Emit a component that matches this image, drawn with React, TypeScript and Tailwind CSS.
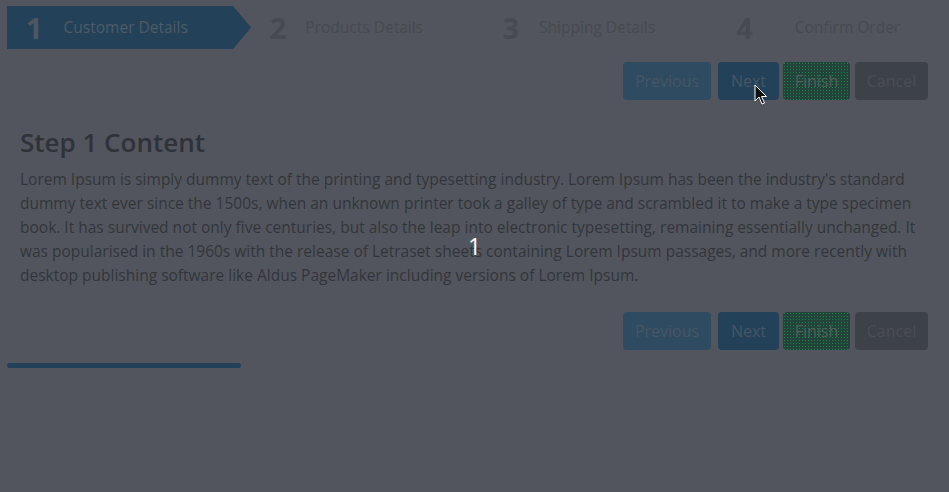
import React from 'react';

const steps = [
  { n: '1', label: 'Customer Details', numMl: 'ml-[19px]', labelMl: 'ml-[21px]' },
  { n: '2', label: 'Products Details', numMl: 'ml-[29px]', labelMl: 'ml-[19px]' },
  { n: '3', label: 'Shipping Details', numMl: 'ml-[28px]', labelMl: 'ml-[20px]' },
  { n: '4', label: 'Confirm Order', numMl: 'ml-[28px]', labelMl: 'ml-[42px]' },
];

const Buttons: React.FC = () => (
  <div className="flex justify-end pr-[21px]">
    <button className="h-[38px] w-[88px] rounded bg-[#2f4b61] text-[#465564] text-[16px]">Previous</button>
    <button className="ml-[7px] h-[38px] w-[61px] rounded bg-[#234259] text-[#475564] text-[16px]">Next</button>
    <button className="ml-[4px] h-[38px] w-[67px] rounded bg-[#23423a] bg-[radial-gradient(#158a48_0.55px,transparent_0.75px)] bg-[length:3px_3px] text-[#50605a] text-[16px]">Finish</button>
    <button className="ml-[5px] h-[38px] w-[73px] rounded bg-[#3d4148] text-[#4a4e55] text-[16px]">Cancel</button>
  </div>
);

export default function App() {
  return (
    <div className="relative w-[949px] h-[492px] overflow-hidden bg-[#52555d] font-['Open_Sans',sans-serif]">
      {/* wizard steps */}
      <div className="flex px-[7px] pt-[6px]">
        {steps.map((s, i) => (
          <div key={s.n} className="relative flex h-[43px] w-[234px] items-center">
            {i === 0 && (
              <div className="absolute inset-y-0 left-0 w-[244px] bg-[#234259] [clip-path:polygon(0_0,226px_0,244px_50%,226px_100%,0_100%)]" />
            )}
            <span className={`relative ${s.numMl} text-[29px] font-bold leading-none ${i === 0 ? 'text-[#4d5763]' : 'text-[#464a51]'}`}>{s.n}</span>
            <span className={`relative ${s.labelMl} text-[15.5px] ${i === 0 ? 'text-[#4f5a66]' : 'text-[#464a51]'}`}>{s.label}</span>
          </div>
        ))}
      </div>

      <div className="mt-[13px]">
        <Buttons />
      </div>

      <div className="px-[20px] pt-[25px]">
        <h2 className="text-[26px] font-semibold leading-[34px] text-[#2f3238]">Step 1 Content</h2>
        <p className="mt-[8px] text-[15.5px] leading-[24px] text-[#32353b]">
          Lorem Ipsum is simply dummy text of the printing and typesetting industry. Lorem Ipsum has been the industry's standard dummy text ever since the 1500s, when an unknown printer took a galley of type and scrambled it to make a type specimen book. It has survived not only five centuries, but also the leap into electronic typesetting, remaining essentially unchanged. It was popularised in the 1960s with the release of Letraset sheets containing Lorem Ipsum passages, and more recently with desktop publishing software like Aldus PageMaker including versions of Lorem Ipsum.
        </p>
      </div>

      <div className="mt-[25px]">
        <Buttons />
      </div>

      <div className="px-[7px] pt-[13px]">
        <div className="h-[5px] w-[234px] rounded-sm bg-[#234259]" />
      </div>

      {/* overlay counter */}
      <span className="absolute left-[468px] top-[229px] text-[23px] text-white">1</span>

      {/* mouse cursor */}
      <svg className="absolute left-[754px] top-[84px]" width="14" height="22" viewBox="0 0 14 22">
        <path d="M1 1 L1 17 L5 13 L8 20 L10.5 19 L7.5 12.5 L12.5 12.5 Z" fill="#111" stroke="#fff" strokeWidth="1" />
      </svg>
    </div>
  );
}
